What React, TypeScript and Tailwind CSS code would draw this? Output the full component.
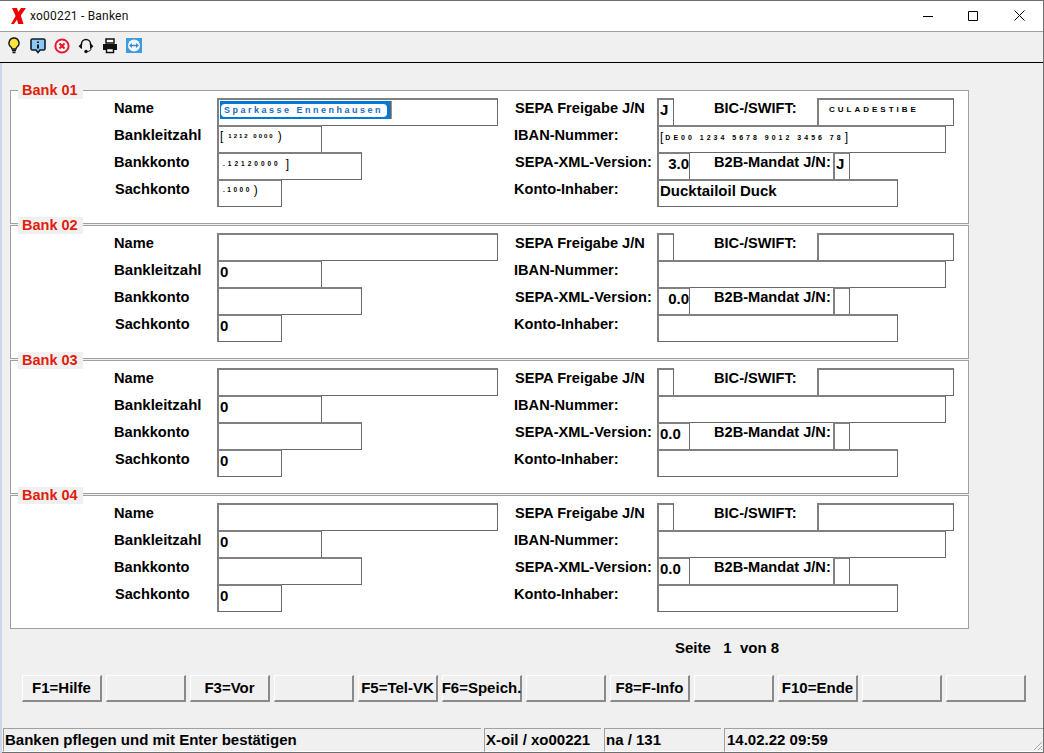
import type { ReactNode } from "react";

type Bank = {
    title: string;
    name?: ReactNode;
    blz: ReactNode;
    konto?: ReactNode;
    sachkonto: ReactNode;
    freigabe?: string;
    bic?: ReactNode;
    iban?: ReactNode;
    version: string;
    versionRight?: boolean;
    mandat?: string;
    inhaber?: string;
};

// smudged (redacted) values: tiny stretched text between two taller brackets
function Smudge({ open, text, close, className }: { open?: string; text: string; close?: string; className: string }) {
    return (
        <div className="flex h-[18px] items-center leading-none font-bold whitespace-nowrap">
            {open && <span className="text-[12px] font-normal">{open}</span>}
            <span className={className}>{text}</span>
            {close && <span className="text-[12px] font-normal">{close}</span>}
        </div>
    );
}

const banks: Bank[] = [
    {
        title: "Bank 01",
        name: (
            <div className="mt-[1px] flex h-[18px] w-[172px] items-center border-r-[1px] border-[#f08020] bg-[#0078d7] pl-[1px]">
                <div className="flex h-[13px] w-[166px] items-center rounded-[4px] bg-white pl-[3px] text-[9px] leading-none tracking-[2.5px] whitespace-nowrap text-[#1a6cc0]">
                    Sparkasse Ennenhausen
                </div>
            </div>
        ),
        blz: <Smudge open="[" text="1212 0000" close=")" className="ml-[5px] mr-[3px] text-[6px] tracking-[2px]" />,
        konto: <div className="mt-[1px] ml-[3px]"><Smudge text=".12120000" close="]" className="mr-[5px] text-[6.5px] tracking-[3px]" /></div>,
        sachkonto: <div className="ml-[3px]"><Smudge text=".1000" close=")" className="mr-[2px] text-[6.5px] tracking-[2.500px]" /></div>,
        freigabe: "J",
        bic: <div className="mt-[1px] ml-[9px]"><Smudge text="CULADESTIBE" className="text-[8px] tracking-[3px]" /></div>,
        iban: <div className="mt-[1px]"><Smudge open="[" text="DE00 1234 5678 9012 3456 78" close="]" className="ml-[2px] mr-[1px] text-[7px] tracking-[3px]" /></div>,
        version: "3.0",
        versionRight: true,
        mandat: "J",
        inhaber: "Ducktailoil Duck",
    },
    { title: "Bank 02", blz: "0", sachkonto: "0", version: "0.0", versionRight: true },
    { title: "Bank 03", blz: "0", sachkonto: "0", version: "0.0" },
    { title: "Bank 04", blz: "0", sachkonto: "0", version: "0.0" },
];

const fkeys = ["F1=Hilfe", "", "F3=Vor", "", "F5=Tel-VK", "F6=Speich.", "", "F8=F-Info", "", "F10=Ende", "", ""];

function Field({ className, children }: { className: string; children?: ReactNode }) {
    return (
        <div className={`h-[28px] shrink-0 overflow-hidden border-t-2 border-r border-b border-l-2 border-t-[#808080] border-r-[#696969] border-b-[#696969] border-l-[#808080] bg-white pl-[1px] text-[15px] leading-[20px] ${className}`}>
            {children}
        </div>
    );
}

function Label({ className, children }: { className: string; children: ReactNode }) {
    return <div className={`mt-[1px] shrink-0 leading-[18px] whitespace-nowrap ${className}`}>{children}</div>;
}

function Row({ label, labelClass = "", rightLabel, rightLabelClass = "", left, children }: {
    label: string;
    labelClass?: string;
    rightLabel: string;
    rightLabelClass?: string;
    left: ReactNode;
    children: ReactNode;
}) {
    return (
        <div className="flex h-[27px]">
            <div className="flex w-[400px] shrink-0">
                <Label className={`w-[103px] ${labelClass}`}>{label}</Label>
                {left}
            </div>
            <div className="flex">
                <Label className={`w-[143px] ${rightLabelClass}`}>{rightLabel}</Label>
                {children}
            </div>
        </div>
    );
}

function BankBox({ bank }: { bank: Bank }) {
    return (
        <div className="relative h-[134px] w-[959px] border border-[#a0a0a0] bg-white pt-[7px] pl-[103px] text-[14.6px] font-bold text-black">
            <div className="absolute -top-[9px] left-[7px] h-[17px] w-[65px] bg-[#f0f0f0] pl-[4px] text-[14.5px] leading-[17px] text-[#e0200c]">
                {bank.title}
            </div>
            <Row
                label="Name"
                rightLabel="SEPA Freigabe J/N"
                rightLabelClass="pl-[1px]"
                left={<Field className="w-[281px]">{bank.name}</Field>}
            >
                <Field className="w-[17px]">{bank.freigabe}</Field>
                <div className="w-[40px] shrink-0" />
                <Label className="w-[103px]">BIC-/SWIFT:</Label>
                <Field className="w-[137px]">{bank.bic}</Field>
            </Row>
            <Row
                label="Bankleitzahl"
                labelClass="text-[15px]"
                rightLabel="IBAN-Nummer:"
                left={<Field className="w-[105px]">{bank.blz}</Field>}
            >
                <Field className="w-[289px]">{bank.iban}</Field>
            </Row>
            <Row
                label="Bankkonto"
                rightLabel="SEPA-XML-Version:"
                rightLabelClass="pl-[1px]"
                left={<Field className="w-[145px]">{bank.konto}</Field>}
            >
                <Field className={`w-[33px] ${bank.versionRight ? "text-right" : ""}`}>{bank.version}</Field>
                <div className="w-[24px] shrink-0" />
                <Label className="w-[119px]">B2B-Mandat J/N:</Label>
                <Field className="w-[17px]">{bank.mandat}</Field>
            </Row>
            <Row
                label="Sachkonto"
                labelClass="pl-[1px]"
                rightLabel="Konto-Inhaber:"
                left={<Field className="w-[65px]">{bank.sachkonto}</Field>}
            >
                <Field className="w-[241px]">{bank.inhaber}</Field>
            </Row>
        </div>
    );
}

function Toolbar() {
    return (
        <div className="flex h-[31px] items-center gap-[8px] border-b border-black bg-[#f0f0f0] pb-[3px] pl-[6px]">
            {/* bulb */}
            <svg width="16" height="17" viewBox="0 0 16 17">
                <path d="M8 1a5 5 0 0 0-3 9c.7.6 1 1.200 1 2h4c0-.8.3-1.400 1-2a5 5 0 0 0-3-9z" fill="#ffe23a" stroke="#111" strokeWidth="1.400" />
                <path d="M6 13.500h4M6.500 15.500h3" stroke="#111" strokeWidth="1.400" />
            </svg>
            {/* info bubble */}
            <svg width="16" height="16" viewBox="0 0 16 16">
                <path d="M2.500 1h11A1.500 1.500 0 0 1 15 2.500v8a1.500 1.500 0 0 1-1.500 1.500H10l-2 2.500L6 12H2.500A1.500 1.500 0 0 1 1 10.500v-8A1.500 1.500 0 0 1 2.500 1z" fill="#8cc8f0" stroke="#0c1c30" strokeWidth="1.600" />
                <path d="M8 3.500v1.500M8 6.500v4" stroke="#0c1c30" strokeWidth="2" />
            </svg>
            {/* cancel */}
            <svg width="16" height="16" viewBox="0 0 16 16">
                <circle cx="8" cy="8" r="6.600" fill="#fff" stroke="#e8182c" strokeWidth="2" />
                <path d="M5.500 5.500l5 5M10.500 5.500l-5 5" stroke="#e8182c" strokeWidth="2.200" />
            </svg>
            {/* headset */}
            <svg width="16" height="16" viewBox="0 0 16 16" fill="none">
                <path d="M3.500 7V6a4.500 4.500 0 0 1 9 0v1" stroke="#111" strokeWidth="1.500" />
                <path d="M3.200 5.500L.6 8.200l2.600 2.600h.8v-5.300zM12.800 5.500l2.600 2.700-2.600 2.600H12v-5.300z" fill="#111" />
                <path d="M13 10.500c0 2-1.500 3-4 3" stroke="#111" strokeWidth="1" />
                <circle cx="8" cy="13.500" r="1.700" fill="#111" />
            </svg>
            {/* printer */}
            <svg width="16" height="16" viewBox="0 0 16 16">
                <path d="M4 1h8v4H4z" fill="#fff" stroke="#111" strokeWidth="1.500" />
                <path d="M1 6h14v6h-3v-2H4v2H1z" fill="#111" />
                <path d="M4.500 10.500h7v4h-7z" fill="#fff" stroke="#111" strokeWidth="1.500" />
            </svg>
            {/* remote support */}
            <svg width="16" height="15" viewBox="0 0 16 15">
                <rect width="16" height="15" fill="#3c9ce0" />
                <circle cx="8" cy="7.500" r="6" fill="#f4f8fc" />
                <path d="M3 7.500l3-2.500v1.800h4V5l3 2.500L10 10V8.200H6V10z" fill="#3c8cd0" />
            </svg>
        </div>
    );
}

function StatusCell({ className, children }: { className: string; children: ReactNode }) {
    return (
        <div className={`h-[24px] border-t border-b border-l border-t-[#a0a0a0] border-b-white border-l-[#a0a0a0] pl-[1px] ${className}`}>
            {children}
        </div>
    );
}

export default function App() {
    return (
        <div className="flex h-[753px] w-[1044px] flex-col overflow-hidden border-t border-r border-t-[#6e6e6e] border-r-[#6e6e6e] bg-[#f0f0f0] font-['Liberation_Sans',sans-serif]">
            <div className="flex h-[31px] items-center border-b border-[#a0a0a0] bg-white pb-[1px] pl-[11px]">
                <svg width="15" height="16" viewBox="0 0 15 16" className="mr-[4px]">
                    <path d="M1 0h5l1.300 4L10 0h5L9.800 7.500 12.500 16H7.200L6 11.500 3 16H0L4.600 8z" fill="#f00000" />
                </svg>
                <div className="font-['Roboto',sans-serif] text-[12px] tracking-[0.2px] text-[#111]">xo00221 - Banken</div>
                <div className="ml-auto flex h-full pr-[1px]">
                    {/* window buttons */}
                    <div className="flex w-[45px] items-center justify-center">
                        <svg width="10" height="10" viewBox="0 0 10 10"><path d="M0 5.500h10" stroke="#000" /></svg>
                    </div>
                    <div className="flex w-[46px] items-center justify-center">
                        <svg width="10" height="10" viewBox="0 0 10 10"><path d="M.5.500h9v9h-9z" fill="none" stroke="#000" /></svg>
                    </div>
                    <div className="flex w-[46px] items-center justify-center">
                        <svg width="11" height="11" viewBox="0 0 11 11"><path d="M.5.500l10 10M10.500.500l-10 10" stroke="#000" /></svg>
                    </div>
                </div>
            </div>
            <Toolbar />
            <div className="flex flex-1 flex-col border-l-2 border-l-[#ccd6e6]">
                <div className="flex flex-col gap-[1px] pt-[27px] pl-[8px]">
                    {banks.map((bank) => (
                        <BankBox key={bank.title} bank={bank} />
                    ))}
                </div>
                <div className="mt-[11px] h-[16px] pl-[673px] text-[15px] leading-[16px] font-bold whitespace-pre text-black">
                    Seite   1  von 8
                </div>
                <div className="mt-[19px] ml-[20px] grid w-[1004px] grid-cols-12 gap-[4px]">
                    {fkeys.map((key, i) => (
                        <div
                            key={i}
                            className="flex h-[27px] items-center justify-center border border-r-2 border-b-2 border-t-white border-r-[#8a8a8a] border-b-[#8a8a8a] border-l-white bg-[#f0f0f0] text-[15px] font-bold whitespace-nowrap text-black"
                        >
                            {key}
                        </div>
                    ))}
                </div>
                <div className="mt-[26px] flex h-[24px] gap-[3px] pl-[1px] text-[15px] leading-[21px] font-bold text-black">
                    <StatusCell className="w-[478px]">Banken pflegen und mit Enter bestätigen</StatusCell>
                    <StatusCell className="w-[117px]">X-oil / xo00221</StatusCell>
                    <StatusCell className="w-[117px] pl-[1px]">na / 131</StatusCell>
                    <StatusCell className="relative flex-1">
                        <div className="pl-[1px]">14.02.22 09:59</div>
                        <svg width="12" height="12" viewBox="0 0 12 12" className="absolute right-0 bottom-0">
                            <path d="M11 3l-8 8M11 7l-4 4M11 10l-1 1" stroke="#a8a8a8" />
                        </svg>
                    </StatusCell>
                </div>
                <div className="h-[1px] bg-[#6e6e6e]" />
            </div>
        </div>
    );
}
